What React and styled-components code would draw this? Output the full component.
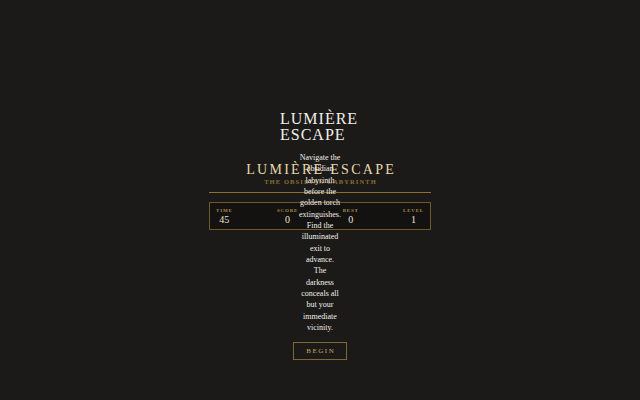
import React from 'react';
import styled, { createGlobalStyle } from 'styled-components';

const GlobalStyle = createGlobalStyle`
  html, body {
    margin: 0;
    padding: 0;
    background: #1b1a19;
  }
  body {
    font-family: "Liberation Serif", "Times New Roman", serif;
  }
`;

const Page = styled.div`
  position: relative;
  width: 640px;
  height: 400px;
  overflow: hidden;
  display: flex;
  flex-direction: column;
  align-items: center;
  padding-top: 161px;
  box-sizing: border-box;
`;

const Title = styled.h1`
  margin: 0;
  font-size: 14px;
  font-weight: 400;
  letter-spacing: 2.3px;
  line-height: 17px;
  color: #e8d9aa;
  padding-left: 2.3px;
`;

const Subtitle = styled.div`
  font-size: 6.5px;
  font-weight: 700;
  letter-spacing: 1.1px;
  line-height: 8px;
  color: #8a6f30;
  padding-left: 1.1px;
`;

const Rule = styled.div`
  width: 222px;
  height: 1px;
  margin-top: 6px;
  background: #8a7030;
`;

const Stats = styled.div`
  width: 222px;
  height: 28px;
  margin-top: 9px;
  box-sizing: border-box;
  border: 1px solid #6e5a28;
  background: #131211;
  padding: 4px 6px 0;
  display: flex;
  justify-content: space-between;
`;

const Stat = styled.div`
  display: flex;
  flex-direction: column;
  align-items: center;
`;

const StatLabel = styled.span`
  font-size: 5px;
  font-weight: 700;
  letter-spacing: 0.8px;
  line-height: 7px;
  color: #a88d4a;
`;

const StatValue = styled.span`
  font-size: 10px;
  line-height: 12px;
  color: #ece4cf;
`;

const Overlay = styled.div`
  position: absolute;
  inset: 0;
  display: flex;
  flex-direction: column;
  align-items: center;
  padding-top: 111px;
  box-sizing: border-box;
`;

const OverlayTitle = styled.h2`
  margin: 0;
  width: 80px;
  font-size: 16px;
  font-weight: 400;
  letter-spacing: 1px;
  line-height: 16px;
  color: #f2efe8;
  text-align: left;
`;

const Blurb = styled.p`
  margin: 9px 0 0;
  width: 42.3px;
  font-size: 8px;
  line-height: 11.33px;
  color: #f2efe8;
  text-align: center;
`;

const BeginButton = styled.button`
  margin-top: 9px;
  width: 54px;
  height: 18px;
  padding: 0 0 0 1.5px;
  background: transparent;
  border: 1px solid #7d6830;
  color: #c9a85a;
  font-family: "Liberation Serif", "Times New Roman", serif;
  font-size: 7px;
  letter-spacing: 1.5px;
  cursor: pointer;
`;

const stats = [
  { label: 'TIME', value: 45 },
  { label: 'SCORE', value: 0 },
  { label: 'BEST', value: 0 },
  { label: 'LEVEL', value: 1 },
];

export default function App() {
  return (
    <>
      <GlobalStyle />
      <Page>
        <Title>LUMIÈRE ESCAPE</Title>
        <Subtitle>THE OBSIDIAN LABYRINTH</Subtitle>
        <Rule />
        <Stats>
          {stats.map(s => (
            <Stat key={s.label}>
              <StatLabel>{s.label}</StatLabel>
              <StatValue>{s.value}</StatValue>
            </Stat>
          ))}
        </Stats>
        <Overlay>
          <OverlayTitle>LUMIÈRE ESCAPE</OverlayTitle>
          <Blurb>
            Navigate the obsidian labyrinth before the golden torch extinguishes.
            Find the illuminated exit to advance. The darkness conceals all but
            your immediate vicinity.
          </Blurb>
          <BeginButton>BEGIN</BeginButton>
        </Overlay>
      </Page>
    </>
  );
}
